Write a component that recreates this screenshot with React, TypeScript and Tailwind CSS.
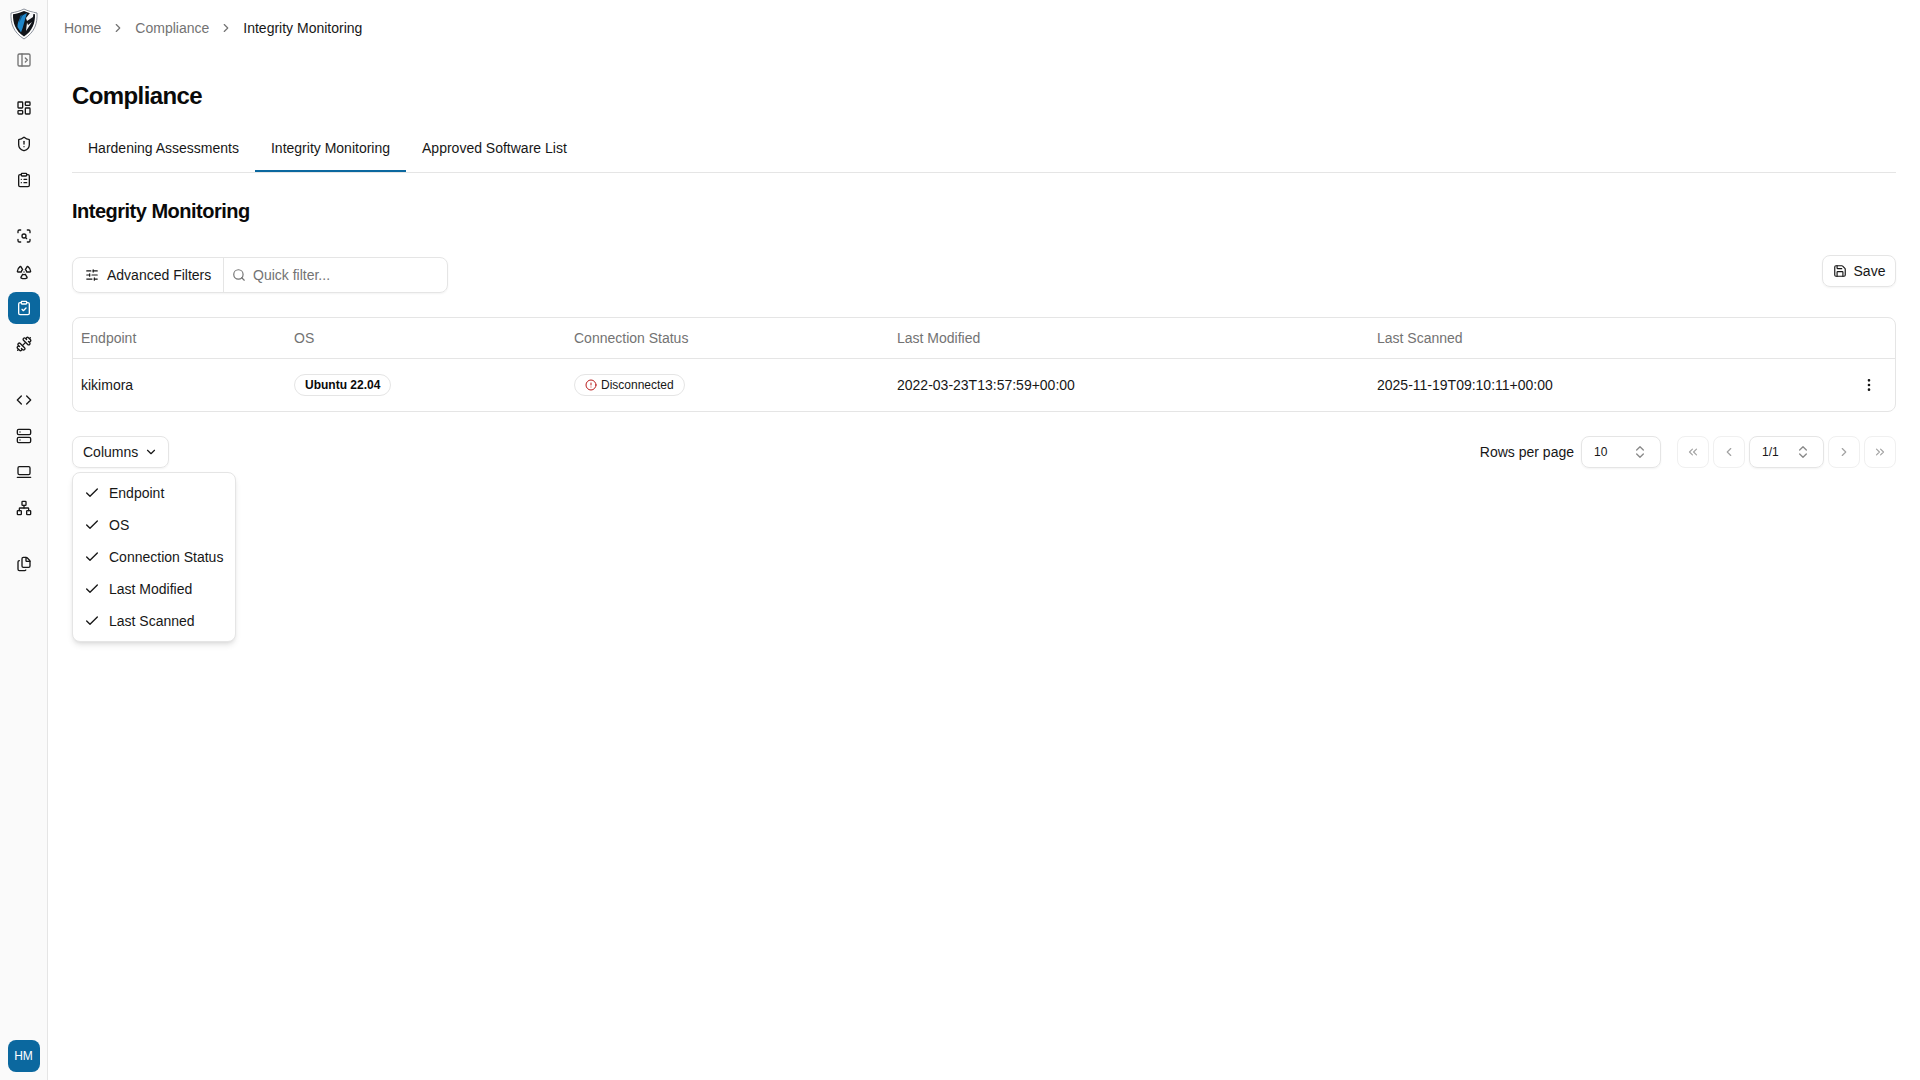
import React from "react";
import {
  Check,
  ChevronDown,
  ChevronLeft,
  ChevronRight,
  ChevronsLeft,
  ChevronsRight,
  ChevronsUpDown,
  CircleAlert,
  ClipboardCheck,
  ClipboardList,
  Code,
  Dumbbell,
  EllipsisVertical,
  Files,
  LaptopMinimal,
  LayoutDashboard,
  Network,
  PanelLeftOpen,
  Radiation,
  Save,
  ScanSearch,
  Search,
  Server,
  ShieldAlert,
  SlidersHorizontal,
} from "lucide-react";

const font = { fontFamily: '"Liberation Sans", Arial, sans-serif' };

const Logo = () => (
  <svg width="30" height="32" viewBox="0 0 30 32">
    <path d="M15 1 C19 3 23 4 28 5 C28.500 15 26 24 15 31 C4 24 1.500 15 2 5 C7 4 11 3 15 1 Z" fill="#fff" stroke="#6b7280" strokeWidth="0.8" />
    <path d="M15 3 C18.500 4.500 22 5.500 26 6.300 C26.300 15 23.500 23 15 28.500 C6.500 23 3.700 15 4 6.300 C8 5.500 11.500 4.500 15 3 Z" fill="#10141a" />
    <path d="M18 5 C12.500 7 8.500 12 8.500 19 L12 24.500 C14.500 19 15.500 12 18 5 Z" fill="#1f86c9" />
    <path d="M11 8 L14 6.500 L10 15 Z" fill="#0b4f80" />
    <path d="M18 13 L24 9 L24.500 4.500 L21 5 L17 10 Z M17 23 L23 14 L19 17 L18 14.500 Z" fill="#f3f4f6" />
  </svg>
);

const NavIcon = ({ icon: Icon, active, muted }: { icon: React.ElementType; active?: boolean; muted?: boolean }) => (
  <div
    className={
      active
        ? "flex h-8 w-8 items-center justify-center rounded-lg bg-[#0b689f] text-white"
        : muted
          ? "flex h-8 w-8 items-center justify-center rounded-lg text-[#737373]"
          : "flex h-8 w-8 items-center justify-center rounded-lg text-[#171717]"
    }
  >
    <Icon size={16} strokeWidth={2} />
  </div>
);

const Sidebar = () => (
  <aside className="flex h-full w-12 shrink-0 flex-col items-center border-r border-[#e5e5e5] bg-[#fafafa] pt-[8px] pb-2">
    <Logo />
    <div className="mt-[4px]">
      <NavIcon icon={PanelLeftOpen} muted />
    </div>
    <div className="mt-4 flex flex-col gap-1">
      <NavIcon icon={LayoutDashboard} />
      <NavIcon icon={ShieldAlert} />
      <NavIcon icon={ClipboardList} />
    </div>
    <div className="mt-6 flex flex-col gap-1">
      <NavIcon icon={ScanSearch} />
      <NavIcon icon={Radiation} />
      <NavIcon icon={ClipboardCheck} active />
      <NavIcon icon={Dumbbell} />
    </div>
    <div className="mt-6 flex flex-col gap-1">
      <NavIcon icon={Code} />
      <NavIcon icon={Server} />
      <NavIcon icon={LaptopMinimal} />
      <NavIcon icon={Network} />
    </div>
    <div className="mt-6">
      <NavIcon icon={Files} />
    </div>
    <div className="mt-auto flex h-8 w-8 items-center justify-center rounded-lg bg-[#0b689f] text-xs text-white">
      HM
    </div>
  </aside>
);

const Breadcrumb = () => (
  <div className="flex h-14 items-center gap-[10px] px-4 text-sm text-[#737373]">
    <span>Home</span>
    <ChevronRight size={14} />
    <span>Compliance</span>
    <ChevronRight size={14} />
    <span className="text-[#171717]">Integrity Monitoring</span>
  </div>
);

const tabs = ["Hardening Assessments", "Integrity Monitoring", "Approved Software List"];

const Tabs = () => (
  <div className="mt-4 flex h-[45px] border-b border-[#e5e5e5] text-sm text-[#171717]">
    {tabs.map((tab) => (
      <div
        key={tab}
        className={
          tab === "Integrity Monitoring"
            ? "flex h-[44px] items-center border-b-2 border-[#0b689f] px-4 pb-[2px]"
            : "flex h-[44px] items-center border-b-2 border-transparent px-4 pb-[2px]"
        }
      >
        {tab}
      </div>
    ))}
  </div>
);

const FilterRow = () => (
  <div className="mt-[30px] flex items-start justify-between">
    <div className="mt-[2px] flex h-9 w-[376px] rounded-lg border border-[#e5e5e5] text-sm shadow-xs">
      <div className="flex w-[151px] shrink-0 items-center gap-2 border-r border-[#e5e5e5] pl-3 text-[#171717]">
        <SlidersHorizontal size={14} />
        Advanced Filters
      </div>
      <div className="flex items-center gap-[7px] pl-2 text-[#737373]">
        <Search size={14} />
        Quick filter...
      </div>
    </div>
    <div className="flex h-8 w-[74px] items-center justify-center gap-[7px] rounded-lg border border-[#e5e5e5] text-sm text-[#171717] shadow-xs">
      <Save size={14} />
      Save
    </div>
  </div>
);

const DataTable = () => (
  <div className="mt-6 overflow-hidden rounded-lg border border-[#e5e5e5]">
    <table className="w-full table-fixed text-sm">
      <colgroup>
        <col className="w-[213px]" />
        <col className="w-[280px]" />
        <col className="w-[323px]" />
        <col className="w-[480px]" />
        <col />
        <col className="w-[54px]" />
      </colgroup>
      <thead>
        <tr className="h-10 border-b border-[#e5e5e5] text-left text-[#737373]">
          <th className="px-2 font-normal">Endpoint</th>
          <th className="px-2 font-normal">OS</th>
          <th className="px-2 font-normal">Connection Status</th>
          <th className="px-2 font-normal">Last Modified</th>
          <th className="px-2 font-normal">Last Scanned</th>
          <th />
        </tr>
      </thead>
      <tbody>
        <tr className="h-[53px] text-[#171717]">
          <td className="px-2">kikimora</td>
          <td className="px-2">
            <span className="inline-flex h-[22px] items-center rounded-full border border-[#e5e5e5] px-[10px] text-xs font-bold text-[#0a0a0a]">
              Ubuntu 22.04
            </span>
          </td>
          <td className="px-2">
            <span className="inline-flex h-[22px] items-center gap-1 rounded-full border border-[#e5e5e5] px-[10px] text-xs text-[#171717]">
              <CircleAlert size={12} className="text-[#b91c1c]" />
              Disconnected
            </span>
          </td>
          <td className="px-2">2022-03-23T13:57:59+00:00</td>
          <td className="px-2">2025-11-19T09:10:11+00:00</td>
          <td className="pr-[18px]">
            <EllipsisVertical size={16} className="ml-auto" />
          </td>
        </tr>
      </tbody>
    </table>
  </div>
);

const columns = ["Endpoint", "OS", "Connection Status", "Last Modified", "Last Scanned"];

const ColumnsMenu = () => (
  <div className="relative">
    <div className="flex h-8 w-[97px] items-center gap-[6px] rounded-lg border border-[#e5e5e5] pl-[10px] text-sm text-[#171717] shadow-xs">
      Columns
      <ChevronDown size={14} />
    </div>
    <div className="absolute top-9 left-0 z-10 flex w-[164px] flex-col rounded-lg border border-[#e5e5e5] bg-white py-1 text-sm text-[#171717] shadow-md">
      {columns.map((column) => (
        <div key={column} className="flex h-8 items-center gap-[9px] pl-[11px]">
          <Check size={16} />
          {column}
        </div>
      ))}
    </div>
  </div>
);

const PageButton = ({ icon: Icon }: { icon: React.ElementType }) => (
  <div className="flex h-8 w-8 items-center justify-center rounded-lg border border-[#f0f0f0] text-[#a3a3a3]">
    <Icon size={14} />
  </div>
);

const Pagination = () => (
  <div className="flex items-center">
    <span className="text-sm text-[#171717]">Rows per page</span>
    <div className="ml-[7px] flex h-8 w-20 items-center justify-between rounded-lg border border-[#e5e5e5] pr-[12px] pl-3 text-xs text-[#171717] shadow-xs">
      10
      <ChevronsUpDown size={16} className="text-[#8a8a8a]" />
    </div>
    <div className="ml-4 flex items-center gap-1">
      <PageButton icon={ChevronsLeft} />
      <PageButton icon={ChevronLeft} />
      <div className="flex h-8 w-[75px] items-center justify-between rounded-lg border border-[#e5e5e5] pr-[12px] pl-3 text-xs text-[#171717] shadow-xs">
        1/1
        <ChevronsUpDown size={16} className="text-[#8a8a8a]" />
      </div>
      <PageButton icon={ChevronRight} />
      <PageButton icon={ChevronsRight} />
    </div>
  </div>
);

export default function App() {
  return (
    <div className="flex h-screen overflow-hidden bg-white" style={font}>
      <Sidebar />
      <main className="min-w-0 flex-1">
        <Breadcrumb />
        <div className="px-6">
          <h1 className="mt-6 text-2xl font-semibold tracking-tight text-[#0a0a0a]">Compliance</h1>
          <Tabs />
          <h2 className="mt-6 text-xl font-semibold tracking-tight text-[#0a0a0a]">Integrity Monitoring</h2>
          <FilterRow />
          <DataTable />
          <div className="mt-6 flex items-start justify-between">
            <ColumnsMenu />
            <Pagination />
          </div>
        </div>
      </main>
    </div>
  );
}
